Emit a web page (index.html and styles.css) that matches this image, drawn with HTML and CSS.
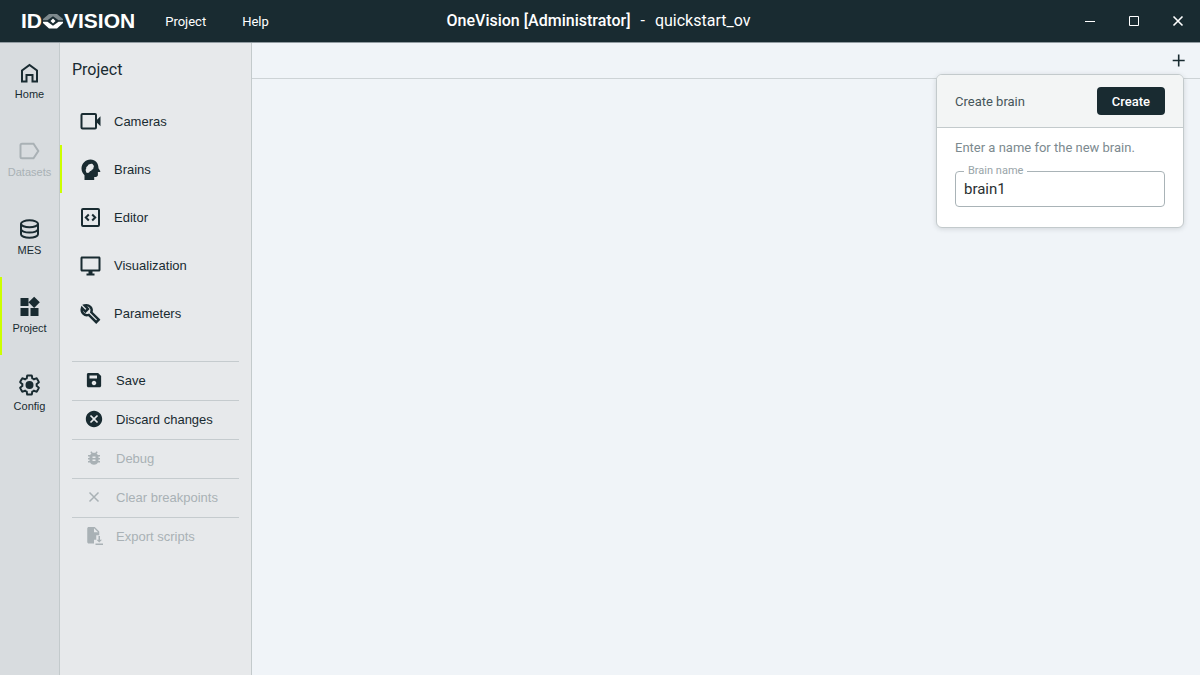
FILE: index.html
```html
<!DOCTYPE html>
<html lang="en">
<head>
    <meta charset="UTF-8">
    <meta name="viewport" content="width=device-width, initial-scale=1.0">
    <title>OneVision [Administrator] - quickstart_ov</title>
    <link rel="stylesheet" href="styles.css">
</head>
<body>
    <header class="titlebar">
        <div class="titlebar-left">
            <div class="logo">
                <span>ID</span>
                <svg width="22" height="16" viewBox="0 0 22 16">
                    <path d="M1 7.300V6L7 1h8l6 5v1.300h-4.500L11 3.200 5.500 7.300z" fill="#7d898d"/>
                    <path d="M1 8.700V10l6 5.500h8l6-5.500V8.700h-4.500L11 12.800 5.500 8.700z" fill="#fff"/>
                    <path d="M11 5.500l2.500 2.500-2.500 2.500L8.500 8z" fill="#fff"/>
                </svg>
                <span>VISION</span>
            </div>
            <nav class="menu">
                <button type="button">Project</button>
                <button type="button">Help</button>
            </nav>
        </div>
        <div class="window-title"><b>OneVision [Administrator]</b><span>-</span><span>quickstart_ov</span></div>
        <div class="window-controls">
            <button type="button" aria-label="Minimize">
                <svg width="12" height="12" viewBox="0 0 12 12"><path d="M1 6.500h10"/></svg>
            </button>
            <button type="button" aria-label="Maximize">
                <svg width="12" height="12" viewBox="0 0 12 12"><path d="M1.500 1.500h9v9h-9z"/></svg>
            </button>
            <button type="button" aria-label="Close">
                <svg width="12" height="12" viewBox="0 0 12 12"><path d="M1.500 1.500l9 9M10.500 1.500l-9 9" stroke-width="1.600"/></svg>
            </button>
        </div>
    </header>

    <div class="app">
        <nav class="rail">
            <button type="button" class="rail-item">
                <svg class="icon line" viewBox="0 0 24 24"><path d="M4 20.500V9.500L11.500 4l7.500 5.500v11h-4.500v-6.500h-6v6.500z"/></svg>
                <span>Home</span>
            </button>
            <button type="button" class="rail-item" disabled>
                <svg class="icon line" viewBox="0 0 24 24"><path d="M4 4.800h11.500l4.800 7.200-4.800 7.200H4a1.500 1.500 0 0 1-1.500-1.500V6.300A1.500 1.500 0 0 1 4 4.800z"/></svg>
                <span>Datasets</span>
            </button>
            <button type="button" class="rail-item">
                <svg class="icon line" viewBox="0 0 24 24"><ellipse cx="11.500" cy="6.800" rx="8.500" ry="3.500"/><path d="M3 6.800v10.400c0 2 3.800 3.600 8.500 3.600s8.500-1.600 8.500-3.600V6.800M3 12c0 2 3.800 3.600 8.500 3.600s8.500-1.600 8.500-3.600"/></svg>
                <span>MES</span>
            </button>
            <button type="button" class="rail-item active">
                <svg class="icon" viewBox="0.500 0 24 24"><path d="M13 13v8h8v-8h-8zM3 21h8v-8H3v8zM3 3v8h8V3H3zm13.660-1.310L11 7.340 16.660 13l5.660-5.660-5.660-5.650z"/></svg>
                <span>Project</span>
            </button>
            <button type="button" class="rail-item">
                <svg class="icon line" viewBox="0.500 0 24 24"><path d="M19.140 12.940c.04-.3.06-.61.06-.94 0-.32-.02-.64-.07-.94l2.030-1.580c.18-.14.23-.41.12-.61l-1.920-3.320c-.12-.22-.37-.29-.59-.22l-2.390.96c-.5-.38-1.030-.7-1.620-.94l-.36-2.540c-.04-.24-.24-.41-.48-.41h-3.840c-.24 0-.43.17-.47.41l-.36 2.540c-.59.24-1.130.57-1.620.94l-2.390-.96c-.22-.08-.47 0-.59.22L2.740 8.870c-.12.21-.08.47.12.61l2.030 1.580c-.05.3-.09.63-.09.94s.02.64.07.94l-2.030 1.580c-.18.14-.23.41-.12.61l1.920 3.320c.12.22.37.29.59.22l2.390-.96c.5.38 1.030.7 1.620.94l.36 2.540c.05.24.24.41.48.41h3.840c.24 0 .44-.17.47-.41l.36-2.540c.59-.24 1.130-.56 1.620-.94l2.390.96c.22.08.47 0 .59-.22l1.920-3.320c.12-.22.07-.47-.12-.61z"/><circle cx="12" cy="12" r="3" fill="currentColor"/></svg>
                <span>Config</span>
            </button>
        </nav>

        <aside class="sidebar">
            <h1>Project</h1>
            <nav class="sections">
                <button type="button">
                    <svg class="icon line" viewBox="0 0 24 24"><rect x="3.500" y="5" width="14.500" height="14.500" rx="1"/><path d="M17.500 12.200l5-5v10z" fill="currentColor" stroke="none"/></svg>
                    Cameras
                </button>
                <button type="button" class="active">
                    <svg class="icon" viewBox="0 0 24 24"><path fill-rule="evenodd" d="M12.500 2.500C7.500 2.500 3.500 6.500 3.500 11.500c0 3 1.300 5 3 6.700V23h9.700v-3h1.500c1.300 0 2.200-.9 2.200-2.200V15h1.800c.6 0 .8-.5.500-1l-1.700-2.800C20.500 6.200 17.500 2.500 12.500 2.500zM10.200 15.800c-1.300.5-2.300-.4-2.200-1.600-.5-.8-.4-1.800.2-2.500-.2-1.200.4-2.200 1.400-2.700.5-1.200 1.600-2 2.900-1.900 1-.6 2.300-.2 2.700.8.800.6.900 1.700.3 2.500.1 1.200-.6 2-1.700 2.400-.3 1-1 1.400-1.900 1.400-.3.900-.8 1.400-1.700 1.600z"/></svg>
                    Brains
                </button>
                <button type="button">
                    <svg class="icon line" viewBox="0 0 24 24"><rect x="4" y="4" width="17" height="17" rx="1"/><path d="M10.800 9.500l-3 3 3 3M14.200 9.500l3 3-3 3"/></svg>
                    Editor
                </button>
                <button type="button">
                    <svg class="icon" viewBox="-0.500 -0.500 24 24"><path d="M20.500 3h-17C2.700 3 2 3.700 2 4.500v12c0 .8.7 1.500 1.500 1.500H10v2H8v2h8v-2h-2v-2h6.500c.8 0 1.500-.7 1.500-1.500v-12c0-.8-.7-1.500-1.500-1.500zM20 16H4V5h16v11z"/></svg>
                    Visualization
                </button>
                <button type="button">
                    <svg class="icon line wrench" viewBox="-0.500 0 24 24"><path d="M20.200 18.700l-7.400-7.400c.8-2 .4-4-1-5.500C10.200 4.200 8 3.800 6 4.400l3.500 3.500-2.600 2.600L3.500 7c-.7 2.100-.2 4.200 1.300 5.700 1.500 1.500 3.600 1.800 5.500 1.100l7.400 7.400z"/></svg>
                    Parameters
                </button>
            </nav>
            <div class="actions">
                <button type="button">
                    <svg class="icon" viewBox="0 0 24 24"><path d="M17.500 2.500H4.500c-1.110 0-2 .9-2 2v15c0 1.100.89 2 2 2h15c1.100 0 2-.9 2-2v-13l-4-4zM12 19c-1.660 0-3-1.340-3-3s1.340-3 3-3 3 1.340 3 3-1.340 3-3 3zm4-9H6V6h10v4z"/></svg>
                    Save
                </button>
                <button type="button">
                    <svg class="icon" viewBox="1 1 22 22"><path d="M12 2C6.470 2 2 6.470 2 12s4.470 10 10 10 10-4.470 10-10S17.530 2 12 2zm5 13.590L15.590 17 12 13.410 8.410 17 7 15.590 10.590 12 7 8.410 8.410 7 12 10.590 15.590 7 17 8.410 13.410 12 17 15.590z"/></svg>
                    Discard changes
                </button>
                <button type="button" disabled>
                    <svg class="icon" viewBox="0 0 24 24"><path d="M20 8h-2.810c-.45-.78-1.070-1.450-1.820-1.960L17 4.410 15.590 3l-2.170 2.170C12.960 5.060 12.490 5 12 5c-.49 0-.96.06-1.410.17L8.410 3 7 4.410l1.620 1.630C7.880 6.550 7.260 7.220 6.810 8H4v2h2.090c-.05.33-.09.66-.09 1v1H4v2h2v1c0 .34.04.67.09 1H4v2h2.810c1.040 1.790 2.970 3 5.190 3s4.150-1.210 5.190-3H20v-2h-2.090c.05-.33.09-.66.09-1v-1h2v-2h-2v-1c0-.34-.04-.67-.09-1H20V8zm-6 8h-4v-2h4v2zm0-4h-4v-2h4v2z"/></svg>
                    Debug
                </button>
                <button type="button" disabled>
                    <svg class="icon line" viewBox="0 0 24 24"><path d="M6 6l12 12M18 6L6 18"/></svg>
                    Clear breakpoints
                </button>
                <button type="button" disabled>
                    <svg class="icon" viewBox="-1 0 24 24"><path fill-rule="evenodd" d="M4 0h8l6 6v5h-4v6h-3v5H4c-1.100 0-2-.9-2-2V2c0-1.100.9-2 2-2zm7 1.500V7h5.500z"/><path d="M17 12h2v5h2.700L18 20.700 14.300 17H17zM13 22h10v2H13z"/></svg>
                    Export scripts
                </button>
            </div>
        </aside>

        <main class="workspace">
            <div class="tabs">
                <button type="button" class="add" aria-label="Add brain">
                    <svg width="14" height="14" viewBox="0 0 14 14"><path d="M6.700 .5v12M.7 6.500h12"/></svg>
                </button>
                <form class="popover">
                    <div class="popover-head">
                        <span>Create brain</span>
                        <button type="submit">Create</button>
                    </div>
                    <div class="popover-body">
                        <p>Enter a name for the new brain.</p>
                        <fieldset>
                            <legend><label for="brainName">Brain name</label></legend>
                            <input type="text" id="brainName" value="brain1">
                        </fieldset>
                    </div>
                </form>
            </div>
        </main>
    </div>
</body>
</html>
```
FILE: styles.css
```css
* {
    box-sizing: border-box;
}
body {
    margin: 0;
    height: 100vh;
    display: flex;
    flex-direction: column;
    font-family: Roboto, "Liberation Sans", sans-serif;
    font-size: 13px;
    color: #192b31;
    background: #f0f4f8;
}
button {
    margin: 0;
    padding: 0;
    border: none;
    background: none;
    color: inherit;
    font: inherit;
    cursor: pointer;
}
button:disabled {
    color: #a9b1b5;
    cursor: default;
}
.icon {
    width: 24px;
    height: 24px;
    flex: none;
    fill: currentColor;
}
.icon.line {
    fill: none;
    stroke: currentColor;
    stroke-width: 2;
}
.icon.wrench {
    stroke-width: 2.4;
}

/* title bar */
.titlebar {
    display: grid;
    grid-template-columns: 1fr auto 1fr;
    align-items: center;
    height: 43px;
    padding: 0 12px 0 9px;
    background: #192b31;
    border-bottom: 1px solid #929ca2;
    color: #fff;
}
.titlebar-left {
    display: flex;
    align-items: center;
    gap: 30px;
    padding-left: 12px;
}
.logo {
    display: flex;
    align-items: center;
    font: bold 21px/24px "Liberation Sans", Arial, sans-serif;
}
.menu {
    display: flex;
    gap: 36px;
    font-size: 13px;
}
.window-title {
    display: flex;
    gap: 10px;
    font-size: 16px;
    line-height: 20px;
}
.window-title b {
    font-weight: 500;
}
.window-controls {
    display: flex;
    justify-content: flex-end;
    gap: 24px;
}
.window-controls button {
    display: flex;
    padding: 4px;
}
.window-controls svg,
.add svg {
    fill: none;
    stroke: currentColor;
}

/* left rail */
.app {
    flex: 1;
    display: flex;
    min-height: 0;
}
.rail {
    width: 60px;
    display: flex;
    flex-direction: column;
    background: #d8dcdf;
    border-right: 1px solid #c3cacc;
    font-family: "Liberation Sans", Arial, sans-serif;
    font-size: 11px;
    line-height: 18px;
}
.rail-item {
    display: flex;
    flex-direction: column;
    align-items: center;
    height: 78px;
    padding-top: 18px;
}
.rail-item.active {
    box-shadow: inset 2px 0 #ccff00;
}

/* project panel */
.sidebar {
    width: 192px;
    padding: 13px 12px 0 0;
    background: #e7e9eb;
    border-right: 1px solid #c3cacc;
    font-family: "Liberation Sans", Arial, sans-serif;
}
h1 {
    margin: 0 0 13px 12px;
    font-family: Roboto, sans-serif;
    font-size: 16px;
    font-weight: 400;
    line-height: 28px;
}
.sections button {
    display: flex;
    align-items: center;
    gap: 12px;
    width: 100%;
    height: 48px;
    padding-left: 18px;
}
.sections .active {
    box-shadow: inset 2px 0 #ccff00;
}
.actions {
    margin: 24px 0 0 12px;
}
.actions button {
    display: flex;
    align-items: center;
    gap: 13px;
    width: 100%;
    height: 39px;
    padding: 0 0 2px 13px;
    border-top: 1px solid #c5cbce;
}
.actions .icon {
    width: 18px;
    height: 18px;
}

/* workspace */
.workspace {
    flex: 1;
}
.tabs {
    position: relative;
    display: flex;
    justify-content: flex-end;
    height: 36px;
    padding-right: 14px;
    border-bottom: 1px solid #cdd3d6;
}
.add {
    display: flex;
    align-items: center;
}
.add svg {
    stroke-width: 1.6;
}
.popover {
    position: absolute;
    top: 31px;
    right: 16px;
    width: 248px;
    overflow: hidden;
    background: #fff;
    border: 1px solid #c3cacc;
    border-radius: 6px;
    box-shadow: 0 1px 5px rgba(25, 43, 49, 0.15);
}
.popover-head {
    display: flex;
    align-items: center;
    justify-content: space-between;
    padding: 12px 18px;
    background: #f3f5f5;
    border-bottom: 1px solid #c3cacc;
    color: #46555a;
}
.popover-head button {
    height: 28px;
    padding: 0 15px;
    border-radius: 4px;
    background: #192b31;
    color: #fff;
    font-weight: 500;
}
.popover-body {
    padding: 10px 18px 20px;
}
.popover-body p {
    margin: 0 0 6px;
    line-height: 20px;
    color: #7c8a8f;
}
fieldset {
    margin: 0;
    padding: 0 8px;
    min-width: 0;
    border: 1px solid #a9b3b7;
    border-radius: 4px;
}
legend {
    padding: 0 4px;
    font-size: 11px;
    line-height: 14px;
    color: #98a4a8;
}
fieldset input {
    display: block;
    width: 100%;
    height: 28px;
    padding: 0 0 6px;
    border: none;
    outline: none;
    background: none;
    color: #2a2f31;
    font: 15px Roboto, sans-serif;
}
```
